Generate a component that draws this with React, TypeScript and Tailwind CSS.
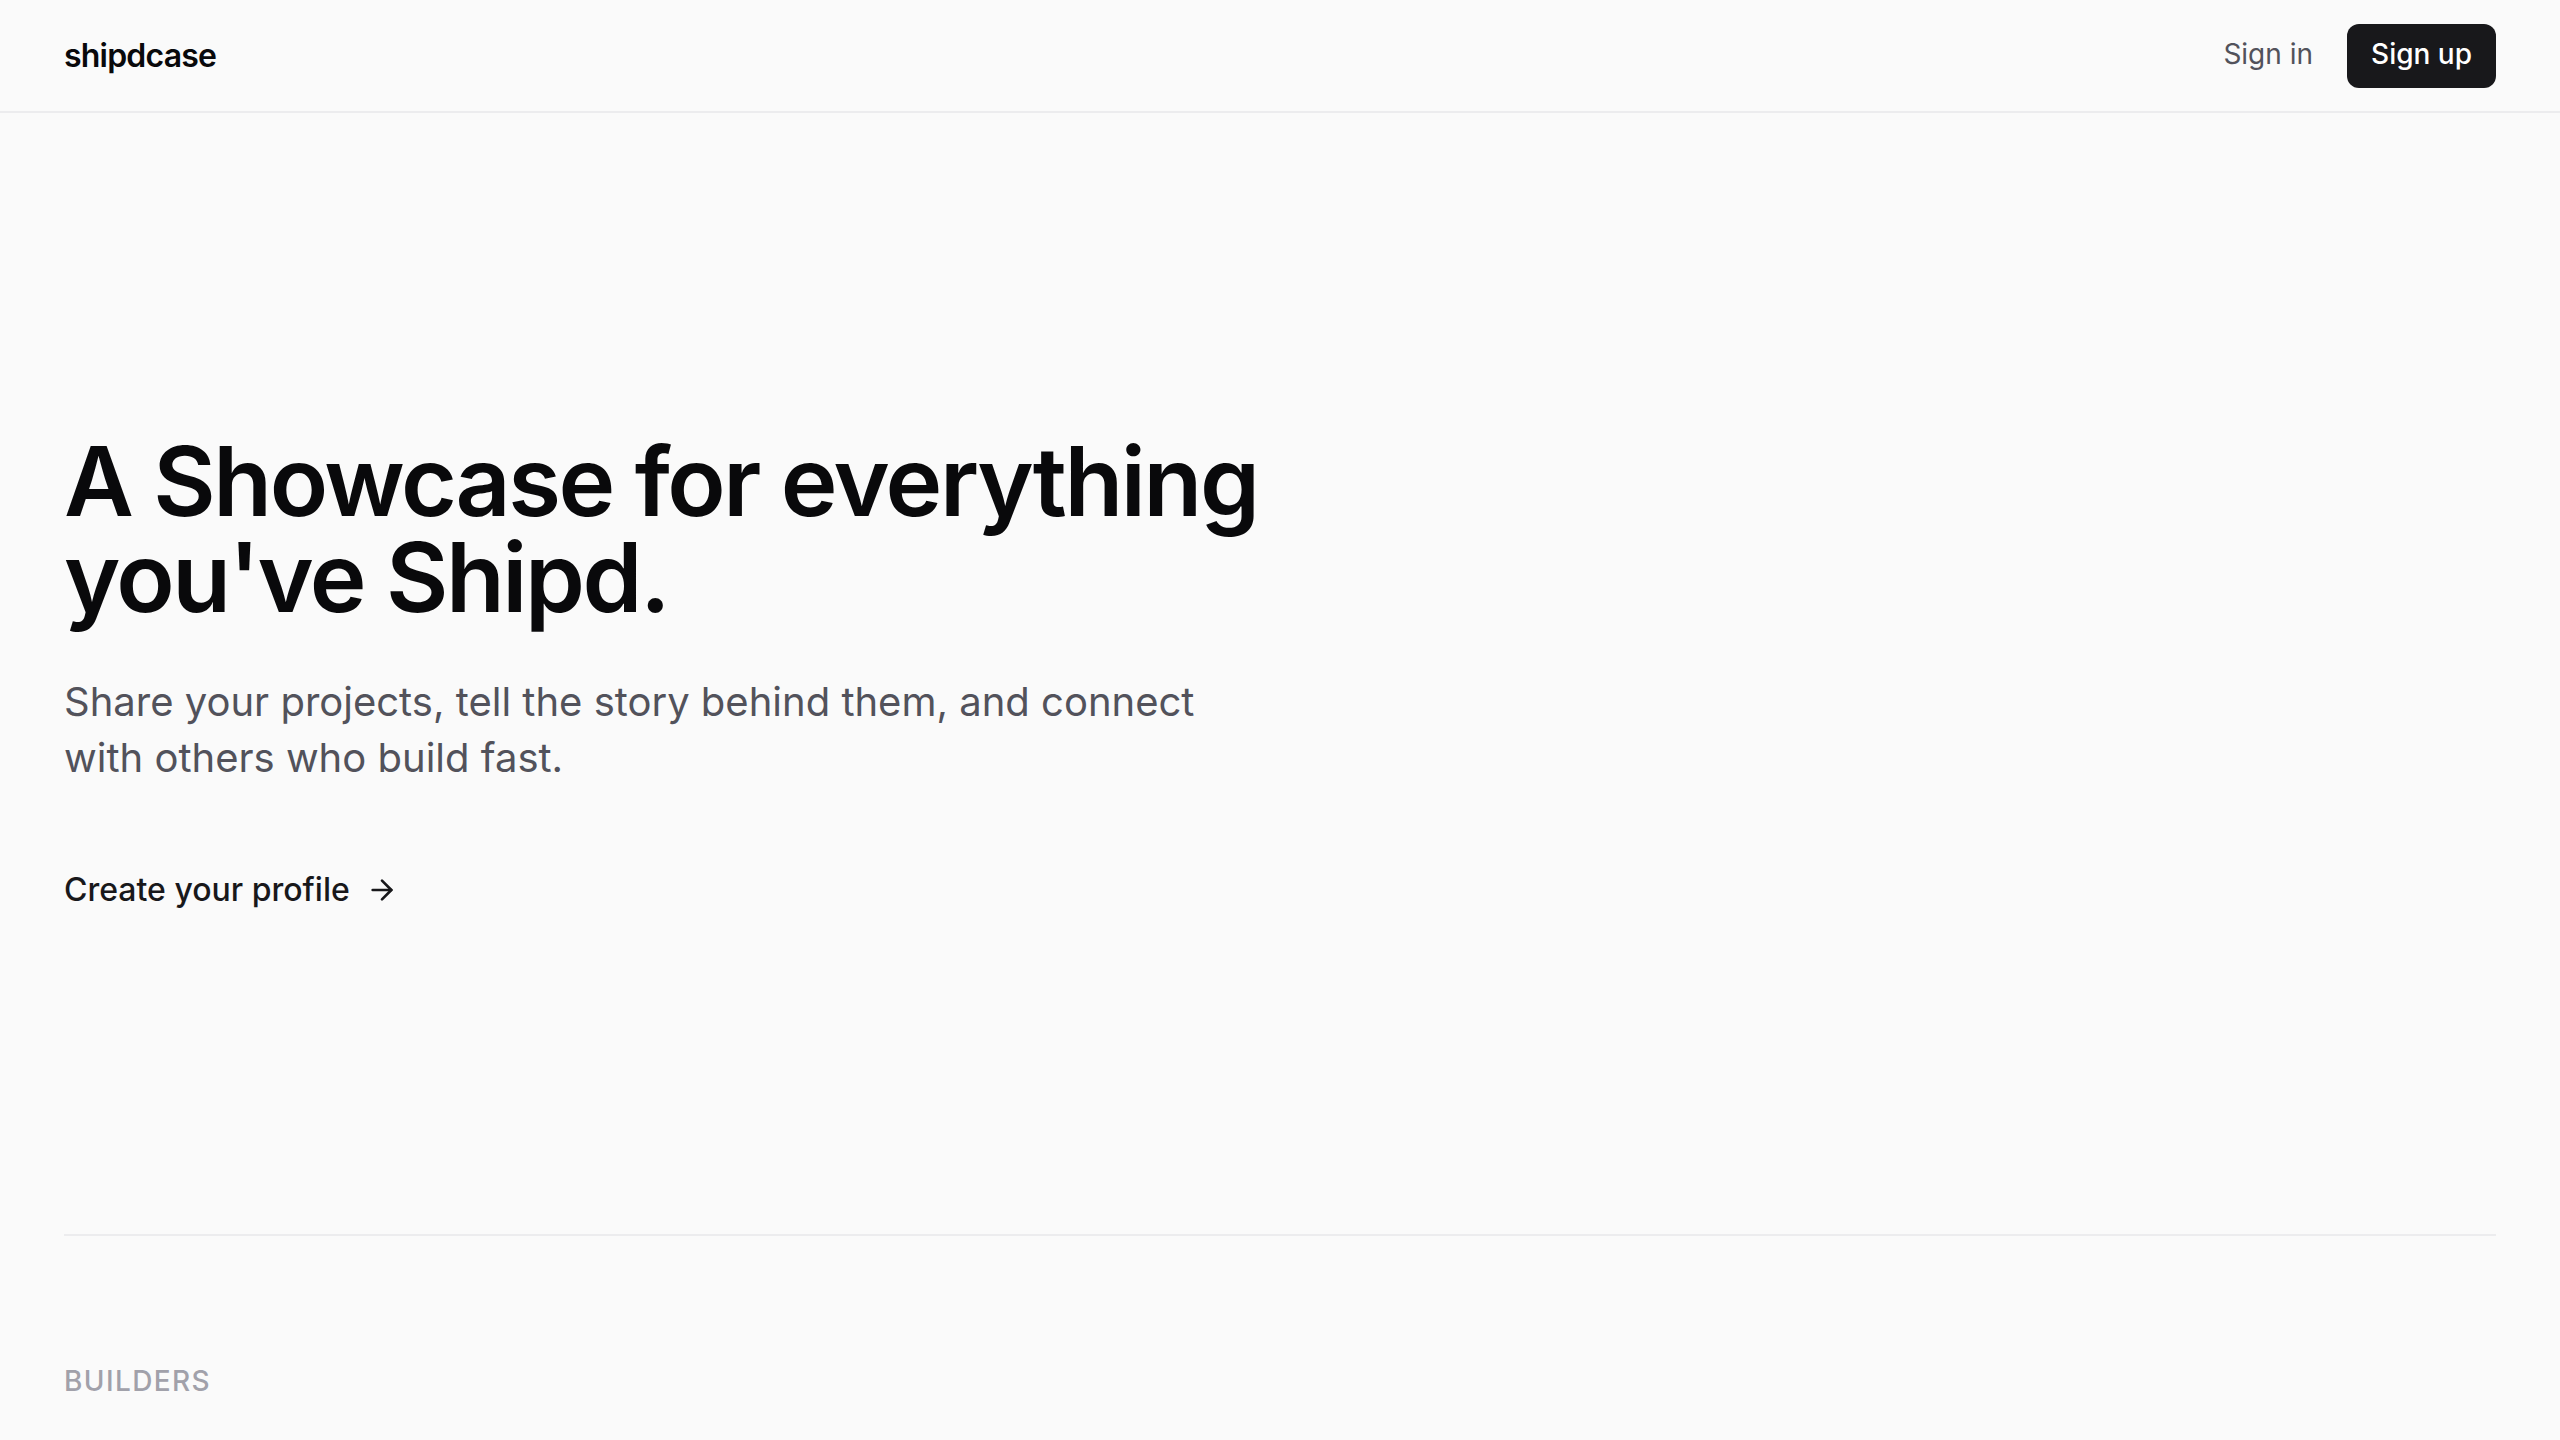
import React from "react";
import { ArrowRight } from "lucide-react";

export default function App() {
  return (
    <div
      className="min-h-screen bg-[#fafafa] text-[#09090b]"
      style={{ fontFamily: "Inter, 'Noto Sans', Arial, sans-serif" }}
    >
      <header className="border-b-2 border-[#ececee]">
        <div className="flex h-[111px] items-center justify-between px-[64px]">
          <a className="text-[32px] font-semibold tracking-[-0.025em] text-[#09090b]">shipdcase</a>
          <nav className="flex items-center gap-[34px]">
            <a className="mb-[3px] text-[28px] leading-[40px] text-[#52525b]">Sign in</a>
            <button className="flex h-[64px] items-center rounded-[12px] bg-[#18181b] px-[24px] pb-[3px] text-[28px] font-medium leading-[40px] text-white">
              Sign up
            </button>
          </nav>
        </div>
      </header>

      <main className="px-[64px]">
        <section className="pt-[320px] pb-[320px]">
          <h1 className="max-w-[1300px] text-[96px] font-semibold leading-[96px] tracking-[-0.025em] text-[#09090b]">
            A Showcase for everything you've Shipd.
          </h1>
          <p className="mt-[49px] max-w-[1152px] text-[40px] leading-[56px] text-[#52525b]">
            Share your projects, tell the story behind them, and connect with others who build fast.
          </p>
          <a className="mt-[80px] flex items-center gap-[16px] text-[32px] font-medium leading-[48px] text-[#18181b]">
            Create your profile
            <ArrowRight size={32} strokeWidth={2} />
          </a>
        </section>

        <div className="h-[2px] bg-[#ececee]" />

        <section className="pt-[125px]">
          <h2 className="text-[28px] font-medium uppercase leading-[40px] tracking-[0.05em] text-[#a1a1aa]">
            Builders
          </h2>
        </section>
      </main>
    </div>
  );
}
